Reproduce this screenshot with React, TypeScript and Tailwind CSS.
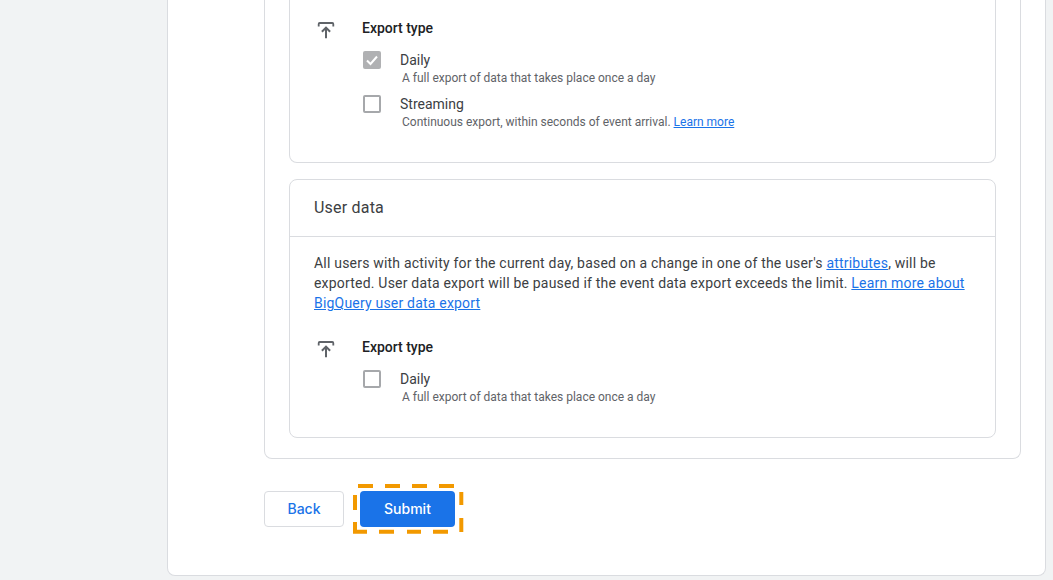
import React from 'react';

const ExportIcon = () => (
  <svg width="24" height="24" viewBox="0 0 24 24" fill="none" stroke="#5f6368" className="shrink-0">
    <path d="M4.7 8.6V6C4.7 5.4 5.2 5 5.7 5H18.3C18.8 5 19.3 5.4 19.3 6V8.6" strokeWidth="1.8" />
    <path d="M12 20.2V10M7.9 13.8L12 9.6L16.1 13.8" strokeWidth="2" />
  </svg>
);

const Checkbox = ({ checked }: { checked?: boolean }) =>
  checked ? (
    <div className="w-[18px] h-[18px] rounded-[2px] bg-[#b0b1b3] flex items-center justify-center">
      <svg width="14" height="14" viewBox="0 0 14 14" fill="none" stroke="#ffffff" strokeWidth="2">
        <path d="M2 7.5L5.5 11L12 3.5" />
      </svg>
    </div>
  ) : (
    <div className="w-[18px] h-[18px] rounded-[2px] border-2 border-[#a6a8ab] bg-white" />
  );

const ExportOption = ({ label, checked, children }: { label: string; checked?: boolean; children: React.ReactNode }) => (
  <div className="flex">
    <div className="w-[38px] pt-[1px] pl-[1px]">
      <Checkbox checked={checked} />
    </div>
    <div>
      <div className="text-[14px] leading-[20px] text-[#3c4043]">{label}</div>
      <div className="text-[12px] leading-[16px] text-[#5f6368] pl-[2px]">{children}</div>
    </div>
  </div>
);

const ExportType = ({ children }: { children: React.ReactNode }) => (
  <div className="flex">
    <div className="w-[48px]">
      <ExportIcon />
    </div>
    <div>
      <div className="text-[14px] leading-[20px] font-medium text-[#202124] mb-[12px]">Export type</div>
      <div className="flex flex-col gap-[8px]">{children}</div>
    </div>
  </div>
);

const linkClass = 'text-[#1a73e8] underline';

export default function App() {
  return (
    <div
      className="h-[580px] w-[1053px] overflow-hidden bg-[#f1f3f4] pl-[167px] pr-[7px]"
      style={{ fontFamily: 'Roboto, sans-serif' }}
    >
      <div className="h-[576px] bg-white border border-t-0 border-[#dadce0] rounded-b-[8px] pl-[96px] pr-[24px]">
        {/* Outer panel */}
        <div className="h-[459px] border border-t-0 border-[#dadce0] rounded-b-[8px] px-[24px]">
          {/* Event data (cut off by the top edge) */}
          <div className="h-[163px] border border-t-0 border-[#dadce0] rounded-b-[8px] pl-[24px] pt-[18px]">
            <ExportType>
              <ExportOption label="Daily" checked>
                A full export of data that takes place once a day
              </ExportOption>
              <ExportOption label="Streaming">
                Continuous export, within seconds of event arrival. <a className={linkClass}>Learn more</a>
              </ExportOption>
            </ExportType>
          </div>

          {/* User data */}
          <div className="mt-[16px] h-[259px] border border-[#dadce0] rounded-[8px]">
            <div className="h-[57px] border-b border-[#dadce0] px-[24px] flex items-center text-[16px] tracking-[0.2px] text-[#3c4043]">
              User data
            </div>
            <div className="px-[24px] pt-[16px]">
              <p className="text-[14px] leading-[20px] text-[#3c4043] tracking-[0.2px]">
                All users with activity for the current day, based on a change in one of the user's{' '}
                <a className={linkClass}>attributes</a>, will be exported. User data export will be paused if the event
                data export exceeds the limit.{' '}
                <a className={linkClass}>Learn more about BigQuery user data export</a>
              </p>
              <div className="mt-[24px]">
                <ExportType>
                  <ExportOption label="Daily">A full export of data that takes place once a day</ExportOption>
                </ExportType>
              </div>
            </div>
          </div>
        </div>

        {/* Actions */}
        <div className="flex mt-[32px] items-center gap-[16px] font-['Inter',sans-serif]">
          <button className="w-[80px] h-[36px] pb-[1px] rounded-[4px] border border-[#dadce0] bg-white text-[14px] font-medium text-[#1a73e8]">
            Back
          </button>
          <div className="relative">
            <button className="block w-[95px] h-[36px] pb-[2px] rounded-[4px] bg-[#1a73e8] text-[14px] font-medium text-white">
              Submit
            </button>
            {/* highlight around the button */}
            <svg width="112" height="50" fill="none" className="absolute -left-[7px] -top-[7px]">
              <path
                d="M5 2H20M32 2H47M59 2H74M86 2H101M108.3 8V21M108.3 34V48M0 47.7H14M26 47.7H41M54 47.7H68M80 47.7H95M2 11V26M2 38V49"
                stroke="#f29900"
                strokeWidth="4"
              />
            </svg>
          </div>
        </div>
      </div>
    </div>
  );
}
